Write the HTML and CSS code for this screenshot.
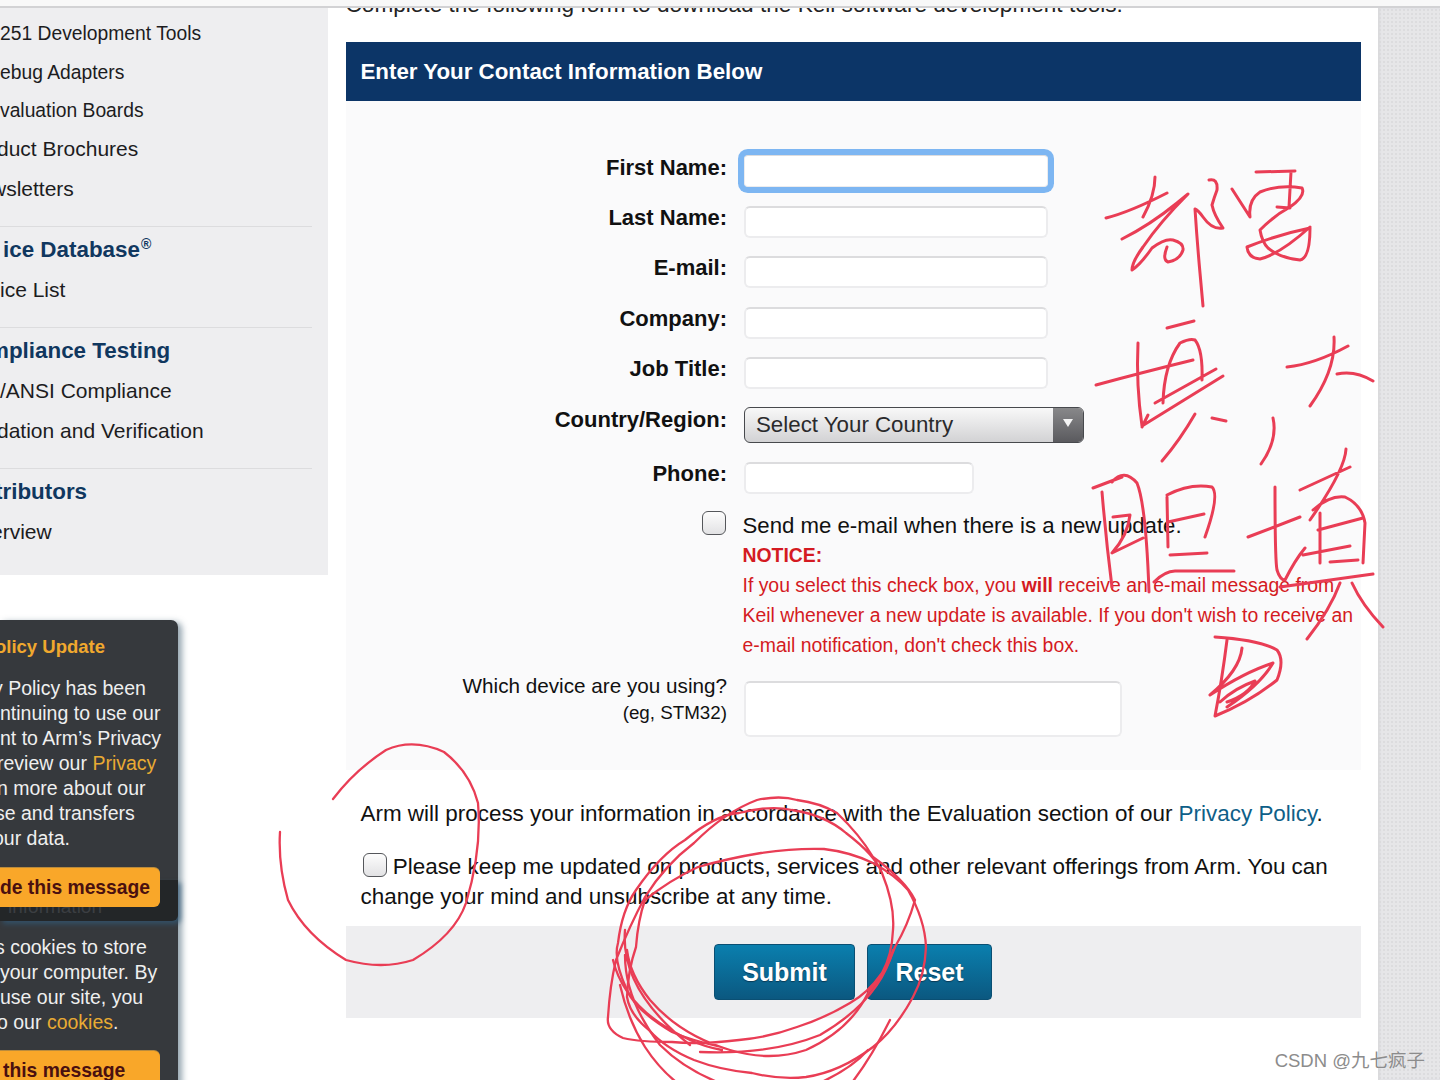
FILE: index.html

```html
<!DOCTYPE html>
<html>
<head>
    <title>Keil Contact Form</title>
    <link rel="stylesheet" href="styles.css">
</head>
<body>
    <div class="topbar"></div>
    <div class="page">
        <div class="leftcol">
            <div class="sidebar">
                <ul class="navlist">
                    <li class="small">251 Development Tools</li>
                    <li class="small">ebug Adapters</li>
                    <li class="small">valuation Boards</li>
                    <li class="cut3 tight">duct Brochures</li>
                    <li class="cut9">wsletters</li>
                </ul>
                <div class="navgroup">
                    <h3 class="push3">ice Database<sup>®</sup></h3>
                    <ul class="navlist"><li>ice List</li></ul>
                </div>
                <div class="navgroup">
                    <h3 class="cut11">mpliance Testing</h3>
                    <ul class="navlist">
                        <li>/ANSI Compliance</li>
                        <li class="cut3">dation and Verification</li>
                    </ul>
                </div>
                <div class="navgroup">
                    <h3 class="cut5">tributors</h3>
                    <ul class="navlist"><li class="cut9">erview</li></ul>
                </div>
            </div>
            <div class="notice-box">
                <h4 class="cut5">olicy Update</h4>
                <div class="msg">
                    <div class="cut7">y Policy has been</div>
                    <div>ntinuing to use our</div>
                    <div>nt to Arm’s Privacy</div>
                    <div class="cut3">review our <a>Privacy</a></div>
                    <div class="cut3">n more about our</div>
                    <div class="cut5">se and transfers</div>
                    <div class="cut7">our data.</div>
                </div>
                <div class="hide-btn">de this message</div>
                <div class="band"><span>information</span></div>
                <div class="msg second">
                    <div class="cut5">s cookies to store</div>
                    <div>your computer. By</div>
                    <div>use our site, you</div>
                    <div class="cut3">o our <a>cookies</a>.</div>
                </div>
                <div class="hide-btn">this message</div>
            </div>
        </div>

        <div class="main">
            <p class="intro">Complete the following form to download the Keil software development tools.</p>
            <h2 class="form-title">Enter Your Contact Information Below</h2>

            <form class="contact">
                <div class="row focus-row">
                    <label>First Name:</label>
                    <input type="text" class="field focused">
                </div>
                <div class="row">
                    <label>Last Name:</label>
                    <input type="text" class="field">
                </div>
                <div class="row">
                    <label>E-mail:</label>
                    <input type="text" class="field">
                </div>
                <div class="row">
                    <label>Company:</label>
                    <input type="text" class="field">
                </div>
                <div class="row">
                    <label>Job Title:</label>
                    <input type="text" class="field">
                </div>
                <div class="row select-row">
                    <label>Country/Region:</label>
                    <div class="select">
                        <span>Select Your Country</span>
                        <div class="select-arrow"><svg width="12" height="10" viewBox="0 0 12 10"><path d="M1 1h10L6 9z" fill="#f4f4f4"/></svg></div>
                    </div>
                </div>
                <div class="row">
                    <label>Phone:</label>
                    <input type="text" class="field short">
                </div>
                <div class="check-row">
                    <div class="check-cell"><span class="checkbox"></span></div>
                    <div class="check-text">
                        <div>Send me e-mail when there is a new update.</div>
                        <div class="red">
                            <b>NOTICE:</b><br>
                            If you select this check box, you <b>will</b> receive an e-mail message from<br>
                            Keil whenever a new update is available. If you don't wish to receive an<br>
                            e-mail notification, don't check this box.
                        </div>
                    </div>
                </div>
                <div class="row device-row">
                    <label class="plain">Which device are you using?<br><small>(eg, STM32)</small></label>
                    <textarea class="field area"></textarea>
                </div>
            </form>

            <div class="consent">
                <p>Arm will process your information in accordance with the Evaluation section of our <a>Privacy Policy</a>.</p>
                <p class="updates"><span class="checkbox"></span> Please keep me updated on products, services and other relevant offerings from Arm. You can change your mind and unsubscribe at any time.</p>
            </div>
            <div class="actions">
                <button type="button" class="btn submit">Submit</button>
                <button type="button" class="btn reset">Reset</button>
            </div>
        </div>
        <div class="gutter"></div>
    </div>

    <svg class="ink" width="1440" height="1080" viewBox="0 0 1440 1080">
        <g fill="none" stroke="#e93d55" stroke-width="3" stroke-linecap="round" stroke-linejoin="round">
            <path d="M1106 218Q1130 212 1167 193M1155 177Q1155 195 1143 217M1122 239Q1150 225 1177 203L1188 194Q1160 222 1143 247Q1132 262 1132 270Q1140 265 1152 248Q1165 238 1173 240Q1184 243 1183 250Q1180 260 1168 262Q1162 260 1167 247"/>
            <path d="M1209 180Q1218 178 1217 190Q1214 198 1212 205Q1214 215 1223 228Q1212 230 1203 217Q1198 210 1195 209Q1197 240 1200 273L1203 306"/>
            <path d="M1256 172L1295 171M1232 189L1250 217Q1248 200 1260 192Q1280 184 1302 188Q1306 196 1290 207Q1275 215 1260 230Q1262 242 1268 248Q1280 258 1300 260Q1310 258 1310 228Q1280 234 1247 247Q1248 258 1260 259Q1280 254 1310 227M1291 172L1289 207M1277 207L1290 208"/>
            <path d="M1096 385Q1140 373 1193 360M1138 343Q1136 385 1142 426L1223 376M1142 427L1148 415M1167 328L1194 321M1163 403Q1164 365 1180 343Q1190 338 1195 340Q1203 350 1202 380M1155 403L1216 369M1195 414Q1180 440 1162 461M1212 418L1226 421"/>
            <path d="M1287 367Q1315 364 1348 346M1334 337Q1336 370 1310 406M1337 374Q1355 370 1373 381M1273 418Q1278 440 1261 464"/>
            <path d="M1093 488L1122 477M1102 492Q1106 540 1112 587M1112 482Q1124 468 1137 483Q1146 505 1149 592M1113 517L1130 515Q1128 535 1112 553L1143 538"/>
            <path d="M1167 497L1168 547M1167 495Q1190 483 1212 487Q1220 495 1205 537M1168 522L1204 514M1170 555L1207 553M1154 582Q1165 571 1175 571L1234 571"/>
            <path d="M1275 487Q1275 560 1277 570Q1280 580 1285 580Q1295 560 1305 548M1248 537L1300 517M1300 490L1350 467M1346 449Q1345 470 1310 520M1313 510Q1330 495 1345 497Q1362 505 1365 523L1363 563M1318 530L1363 518M1320 513L1320 563M1303 555L1350 546M1330 562L1358 560M1280 587L1373 574M1352 583Q1362 605 1383 627M1340 583Q1330 610 1307 639"/>
            <path d="M1215 637Q1260 640 1277 650Q1285 660 1277 680Q1250 702 1215 716Q1222 680 1227 640M1242 648Q1240 670 1210 695Q1245 672 1273 663Q1260 685 1227 707M1220 702Q1235 688 1255 681Q1248 695 1227 702"/>
            <g stroke-width="2.3">
                <path d="M333 799Q355 770 386 750Q413 738 444 752Q470 772 478 803Q482 850 466 903Q455 935 413 960Q382 970 346 960Q305 935 288 900Q278 865 280 832"/>
                <path d="M721 1047Q690 1040 672 1032Q635 1010 627 990Q613 960 618 943Q622 910 636 890Q660 855 685 840Q715 815 739 813Q770 805 792 810Q825 815 846 833Q875 855 882 873Q895 905 893 930Q892 955 882 973Q868 993 850 1003Q825 1018 797 1027Q770 1037 739 1040Q700 1045 672 1042Q640 1042 623 1038Q606 1030 608 1017Q610 985 616 960Q630 925 645 897Q665 865 694 843Q725 812 757 800Q780 795 797 800Q820 803 837 813Q860 835 873 857Q905 880 915 900Q908 925 895 947Q885 975 868 993Q850 1030 806 1050Q770 1062 730 1050Q680 1035 650 1000Q630 975 627 950"/>
                <path d="M636 947Q638 920 645 900Q670 880 698 867Q730 858 761 853Q795 848 824 849Q850 852 873 863Q895 875 908 890Q925 920 926 947Q925 975 913 997Q895 1030 873 1047Q840 1072 806 1077Q780 1080 752 1073Q720 1070 694 1060Q665 1048 649 1030Q630 1015 627 997Q628 970 636 947"/>
                <path d="M620 985Q628 1020 645 1047Q660 1070 680 1085M625 955Q625 1000 660 1045Q690 1075 740 1090M868 1050Q850 1070 815 1085M890 1020Q870 1060 850 1085M613 960Q625 1010 690 1040Q705 1047 722 1050M625 930Q620 990 690 1045M893 950Q880 1000 820 1035Q770 1055 700 1052"/>
            </g>
        </g>
    </svg>
    <div class="watermark">CSDN @九七疯子</div>
</body>
</html>
```

FILE: styles.css

```css
html, body { margin: 0; padding: 0; height: 1080px; overflow: hidden; background: #fff; }
body { font-family: "Liberation Sans", Arial, "Noto Sans CJK SC", sans-serif; color: #111; position: relative; }
.topbar { height: 6px; border-bottom: 2px solid #d2d2d4; background: #f8f8f8; position: relative; z-index: 2; }
.page { display: flex; height: 1072px; overflow: hidden; }

/* text that the left edge of the window cuts off */
.cut3 { text-indent: -3px; }
.cut5 { text-indent: -5px; }
.cut7 { text-indent: -7px; }
.cut9 { text-indent: -9px; }
.cut11 { text-indent: -11px; }
.push3 { padding-left: 3px; }

/* left column */
.leftcol { width: 328px; flex: none; position: relative; }
.sidebar { background: #eeeef0; height: 567px; padding-top: 7px; box-sizing: border-box; }
.navlist { list-style: none; margin: 0; padding: 0; font-size: 21px; line-height: 40px; color: #1c1c1e; }
.navlist .small { font-size: 19.3px; line-height: 38.5px; }
.navlist .tight { margin-top: -1.5px; }
.navgroup { margin: 17px 16px 0 0; border-top: 1px solid #dcdcde; padding-top: 2px; }
.navgroup h3 { margin: 0; font-size: 22.4px; line-height: 41px; font-weight: bold; color: #10375f; }
.navgroup sup { font-size: 14px; line-height: 0; font-weight: bold; margin-left: 1px; }
.notice-box { margin-top: 45px; width: 178px; height: 480px; background: #36393d; border-radius: 0 7px 0 0; box-shadow: 4px 2px 6px rgba(60, 90, 110, .55); color: #efefef; font-size: 19.5px; line-height: 25px; padding-top: 15px; box-sizing: border-box; position: relative; white-space: nowrap; }
.notice-box h4 { margin: 0 0 17px; font-size: 18.5px; line-height: 24px; color: #f0a82e; }
.notice-box a { color: #e9ab33; }
.msg { position: relative; }
.msg.second { margin-top: 28px; }
.hide-btn { width: 160px; height: 39px; margin-top: 17px; background: #f9a729; border-radius: 0 6px 6px 0; color: #4a1010; font-weight: bold; font-size: 19.3px; line-height: 39px; box-sizing: border-box; text-align: right; padding-right: 11px; position: relative; z-index: 1; box-shadow: 0 -1px 0 #b98b3d; }
.second + .hide-btn { margin-top: 16px; text-align: left; padding: 0 0 0 3px; }
.band { position: absolute; left: 0; top: 260px; width: 178px; height: 41px; background: #232628; border-radius: 0 0 6px 0; box-shadow: 3px 3px 5px rgba(50, 90, 120, .7); font-size: 19px; color: #3b3e42; line-height: 54px; overflow: hidden; padding-left: 8px; box-sizing: border-box; }

/* main column */
.main { width: 1015px; margin-left: 17.5px; flex: none; }
.intro { margin: -15px 0 0; font-size: 22.6px; line-height: 24px; height: 24px; white-space: nowrap; color: #222; }
.form-title { margin: 25px 0 0; background: #0c3567; color: #fff; font-size: 22.3px; line-height: 59px; height: 59px; padding-left: 15px; font-weight: bold; }
.contact { background: #fafafb; height: 669px; padding-top: 47px; box-sizing: border-box; }
.row { display: flex; align-items: flex-start; height: 50.3px; }
.row label { width: 381.5px; text-align: right; font-weight: bold; font-size: 22px; line-height: 32px; margin-right: 17px; flex: none; margin-top: -4px; }
.field { display: block; width: 304px; height: 32px; box-sizing: border-box; border: 2px solid #ececee; border-top-color: #dcdcde; border-radius: 6px; background: #fff; padding: 0; margin: 0; outline: none; resize: none; }
.focus-row { height: 50px; margin-top: 8px; }
.focused { box-shadow: 0 0 0 6px #7db6f2; border-width: 1px; margin-top: -1px; border-radius: 4px; }
.short { width: 230px; }
.select-row { height: 55px; }
.row.select-row label { margin-top: -3px; }
.select { width: 340px; height: 36px; box-sizing: border-box; border: 1px solid #47494d; border-radius: 6px; background: linear-gradient(#f8f8f8, #d2d2d4); display: flex; justify-content: space-between; font-size: 22.3px; line-height: 34px; padding-left: 11px; overflow: hidden; color: #2a2a2c; }
.select-arrow { width: 30px; background: linear-gradient(#88888a, #5a5a5e); display: flex; align-items: flex-start; justify-content: center; padding-top: 10px; box-sizing: border-box; }
.check-row { display: flex; margin-top: -1px; white-space: nowrap; }
.check-cell { width: 381px; margin-right: 16px; display: flex; justify-content: flex-end; flex: none; }
.check-cell .checkbox { margin-right: 1px; }
.checkbox { display: inline-block; width: 22px; height: 22px; border: 1.5px solid #55575b; border-radius: 6px; background: linear-gradient(#fdfdfd, #e2e2e4); vertical-align: -3px; }
.check-text { font-size: 22.2px; line-height: 30px; }
.red { color: #d41a22; font-size: 19.4px; line-height: 30px; margin-top: -1px; }
.device-row { margin-top: 21px; height: auto; }
.device-row label.plain { font-weight: normal; font-size: 20.7px; line-height: 26px; margin-top: -8px; }
.device-row small { font-size: 18.8px; }
.area { width: 378px; height: 56px; }

.consent { padding: 29px 15px 0; height: 156px; box-sizing: border-box; font-size: 22.45px; line-height: 30px; }
.consent p { margin: 0; }
.consent a { color: #0f5f88; }
.consent .updates { margin-top: 23px; }
.updates .checkbox { margin-left: 2px; }
.actions { background: #eeeef0; height: 92px; display: flex; justify-content: center; gap: 12px; padding-top: 18px; box-sizing: border-box; }
.btn { height: 56px; border: 1px solid #0a4f73; border-radius: 4px; background: linear-gradient(#0a7fae, #0b5880); color: #fff; font-family: inherit; font-size: 25px; font-weight: bold; padding: 0; text-shadow: 0 1px 1px #0a3a55; }
.submit { width: 141px; }
.reset { width: 125px; }

.gutter { width: 62px; margin-left: 17.5px; flex: none; background: #e6e6e8; background-image: radial-gradient(#dcdcde 1px, transparent 1px); background-size: 4px 4px; box-shadow: inset 2px 0 2px #dadadc; }

/* hand drawn marks over the page */
.ink { position: absolute; left: 0; top: 0; pointer-events: none; }
.watermark { position: absolute; right: 15px; bottom: 8px; font-size: 18.5px; color: #8c8c8c; }
```
